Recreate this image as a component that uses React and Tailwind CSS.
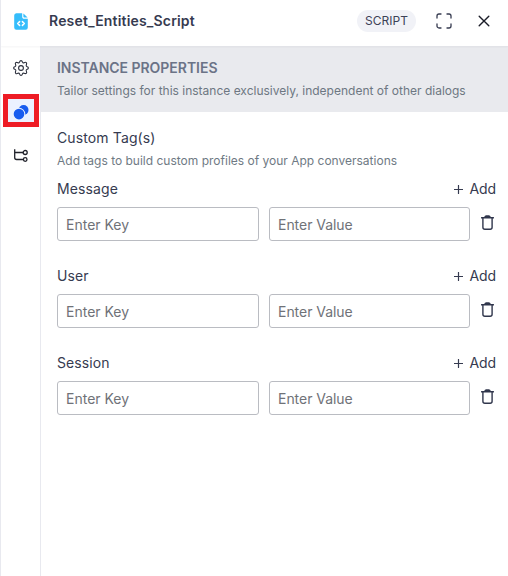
import React from 'react';

const FileCode = () => (
  <svg className="block h-[17px] w-[14px]" viewBox="0 0 14 17">
    <path
      d="M2.2 0.2H8.2V3.7C8.2 5 9 5.8 10.2 5.8H13.8V14.6A2.2 2.2 0 0 1 11.6 16.8H2.4A2.2 2.2 0 0 1 0.2 14.6V2.4A2.2 2.2 0 0 1 2.2 0.2Z"
      fill="#35bdfb"
    />
    <path d="M9.4 0.4L13.6 4.6H10.2Q9.4 4.6 9.4 3.8Z" fill="#35bdfb" />
    <path
      d="M5.6 8.6L3.7 10.5L5.6 12.4M8.4 8.6L10.3 10.5L8.4 12.4"
      fill="none"
      stroke="#fff"
      strokeWidth="1.5"
      strokeLinecap="round"
      strokeLinejoin="round"
    />
  </svg>
);

const Expand = () => (
  <svg className="block size-4" viewBox="0 0 16 16" fill="none" stroke="#363b50" strokeWidth="1.3" strokeLinecap="round">
    <path d="M1 5V3A2 2 0 0 1 3 1H5M11 1H13A2 2 0 0 1 15 3V5M15 11V13A2 2 0 0 1 13 15H11M5 15H3A2 2 0 0 1 1 13V11" />
  </svg>
);

const Close = () => (
  <svg className="block size-3" viewBox="0 0 12 12" fill="none" stroke="#1b1d28" strokeWidth="1.4" strokeLinecap="round">
    <path d="M1.2 1.2L10.8 10.8M10.8 1.2L1.2 10.8" />
  </svg>
);

const Gear = () => (
  <svg className="block size-4" viewBox="0 0 16 16" fill="none" stroke="#2b2f3c" strokeWidth="1.1" strokeLinejoin="round">
    <path d="M6.5 2.2Q7 .6 8 .6T9.5 2.2Q10 3.2 11.1 2.7Q12.6 1.9 13.3 2.7T13.3 4.9Q12.8 6 13.8 6.5Q15.4 7 15.4 8T13.8 9.5Q12.8 10 13.3 11.1Q14.1 12.6 13.3 13.3T11.1 13.3Q10 12.8 9.5 13.8Q9 15.4 8 15.4T6.5 13.8Q6 12.8 4.9 13.3Q3.4 14.1 2.7 13.3T2.7 11.1Q3.2 10 2.2 9.5Q.6 9 .6 8T2.2 6.5Q3.2 6 2.7 4.9Q1.9 3.4 2.7 2.7T4.9 2.7Q6 3.2 6.5 2.2Z" />
    <circle cx="8" cy="8" r="2.4" />
  </svg>
);

const Instances = () => (
  <svg className="block h-[15px] w-4" viewBox="0 0 16 15">
    <circle cx="10.6" cy="5" r="4.9" fill="#175bef" />
    <circle cx="6" cy="9.1" r="6.3" fill="#ebf1ff" />
    <circle cx="6" cy="9.1" r="5.3" fill="#175bef" />
  </svg>
);

const Tree = () => (
  <svg className="block h-[13px] w-[14px]" viewBox="0 0 14 13" fill="none" stroke="#20222b" strokeWidth="1.3">
    <path d="M.7 0.2V8.5Q.7 10.5 2.6 10.5H9M.7 3.5H9" />
    <circle cx="11.2" cy="3.5" r="2" />
    <circle cx="11.2" cy="10.5" r="1.8" />
  </svg>
);

const Plus = () => (
  <svg className="block size-[9px]" viewBox="0 0 9 9" fill="none" stroke="#363b50" strokeWidth="1.2" strokeLinecap="round">
    <path d="M4.5 .4V8.6M.4 4.5H8.6" />
  </svg>
);

const Trash = () => (
  <svg className="block h-[15px] w-[13px]" viewBox="0 0 13 15">
    <path d="M3 2.8Q3.4 0.3 5 0.3H8Q9.6 0.3 10 2.8Z" fill="#30364c" />
    <path
      d="M.6 2.8H12.4M1.9 2.8V12.2Q1.9 14.2 3.9 14.2H9.1Q11.1 14.2 11.1 12.2V2.8"
      fill="none"
      stroke="#30364c"
      strokeWidth="1.4"
      strokeLinecap="round"
    />
  </svg>
);

const inputClass =
  'block h-[34px] rounded-[3px] border border-[#babcc2] bg-white px-2 pt-px text-sm text-[#202124] outline-none placeholder:text-[#6f7278]';

function TagGroup({ name }) {
  return (
    <section className="h-[87px]">
      <div className="flex h-5 items-center justify-between pr-3 text-sm text-[#363b50]">
        <h3 className="tracking-[0.1px]">{name}</h3>
        <button className="flex items-center gap-[6px]">
          <Plus />
          <span className="tracking-[-0.1px]">Add</span>
        </button>
      </div>
      <div className="mt-2 flex">
        <input className={`${inputClass} w-[202px]`} placeholder="Enter Key" />
        <input className={`${inputClass} ml-[10px] w-[201px] tracking-[-0.04px]`} placeholder="Enter Value" />
        <button className="ml-[11px] mt-[8px] self-start">
          <Trash />
        </button>
      </div>
    </section>
  );
}

export default function App() {
  return (
    <div className="flex h-[576px] w-[508px] flex-col overflow-hidden whitespace-nowrap border-l border-[#e8e9ef] bg-white font-['Inter','Liberation_Sans',sans-serif]">
      <header className="z-10 flex h-[46px] shrink-0 items-center bg-white pb-[4px] pl-[13px] pr-[18px] shadow-[0_1px_2px_rgba(30,35,60,0.05)]">
        <FileCode />
        <h1 className="ml-[21px] text-sm font-semibold tracking-[0.17px] text-[#363b50]">Reset_Entities_Script</h1>
        <span className="ml-auto flex h-[22px] w-[59px] items-center justify-center rounded-full bg-[#f1f2f7] text-xs text-[#3d4257]">
          SCRIPT
        </span>
        <button className="ml-5">
          <Expand />
        </button>
        <button className="ml-[26px]">
          <Close />
        </button>
      </header>
      <div className="flex min-h-0 flex-1">
        <nav className="flex w-10 shrink-0 flex-col items-center border-r border-[#e8e9ef] pt-[14px]">
          <button>
            <Gear />
          </button>
          <button className="mt-[18px] flex h-[33px] w-9 items-center justify-center border-[5px] border-[#ee1c25] bg-[#ebf1ff] pt-[3px]">
            <Instances />
          </button>
          <button className="ml-px mt-[22px]">
            <Tree />
          </button>
        </nav>
        <main className="flex-1">
          <div className="h-[66px] bg-[#e9eaee] pl-4 pt-3">
            <h2 className="text-sm font-semibold leading-5 tracking-[-0.03px] text-[#6b7387]">INSTANCE PROPERTIES</h2>
            <p className="mt-1 text-xs leading-[18px] text-[#6d7782]">
              Tailor settings for this instance exclusively, independent of other dialogs
            </p>
          </div>
          <div className="pl-4 pt-4">
            <h2 className="text-sm leading-5 tracking-[0.12px] text-[#363b50]">Custom Tag(s)</h2>
            <p className="mb-[10px] mt-[4px] text-xs leading-[17px] text-[#6f7a84]">
              Add tags to build custom profiles of your App conversations
            </p>
            <TagGroup name="Message" />
            <TagGroup name="User" />
            <TagGroup name="Session" />
          </div>
        </main>
      </div>
    </div>
  );
}
